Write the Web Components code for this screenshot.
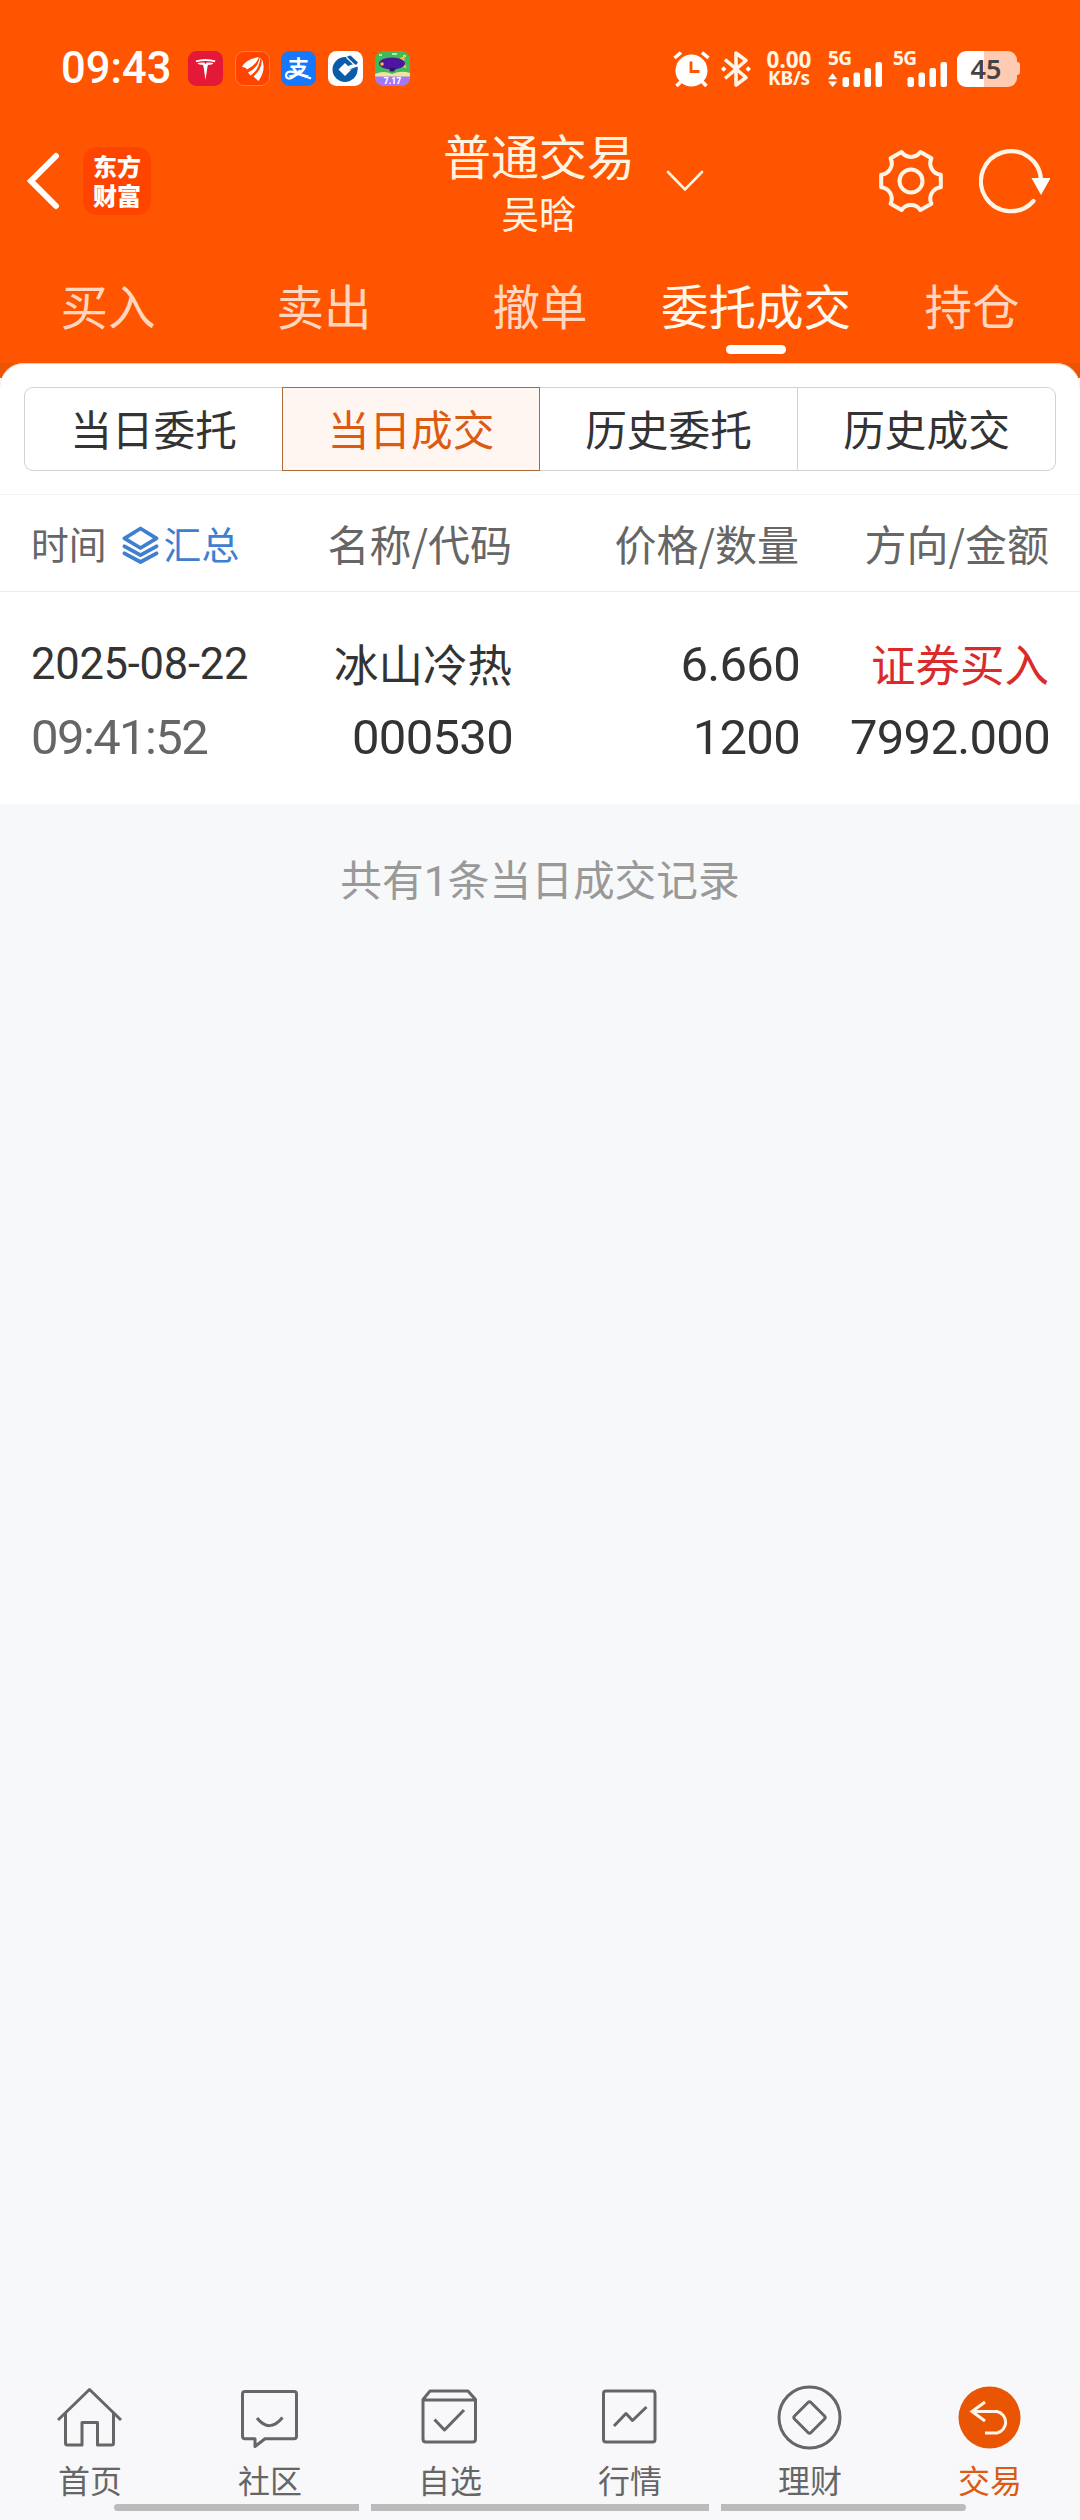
<!DOCTYPE html>
<html lang="zh-CN">
<head>
<meta charset="utf-8">
<title>普通交易</title>
<style>
html,body{margin:0;padding:0}
body{width:1080px;height:2520px;overflow:hidden;background:#f7f8fa;font-family:"Noto Sans CJK SC",sans-serif;color:#333}
</style>
</head>
<body>
<trade-app></trade-app>
<script>
const define = (name, html) => {
  const tpl = document.createElement('template');
  tpl.innerHTML = html;
  customElements.define(name, class extends HTMLElement {
    constructor() {
      super();
      this.attachShadow({ mode: 'open' }).appendChild(tpl.content.cloneNode(true));
    }
  });
};

/* Status bar: clock, notification icons, radios, battery */
define('signal-bars', `
<style>
:host{display:flex;flex-direction:column;height:36px;width:55px;font:700 19px/15px "Noto Sans",sans-serif;color:#fff5e6}
svg{display:block;margin-top:-4px}
span{letter-spacing:-.6px}
:host([idle]) .data{display:none}
</style>
<span>5G</span>
<svg width="55" height="25" viewBox="0 0 55 25" fill="#fff">
<rect x="14.5" y="15" width="6.5" height="10" rx="2.2"/><rect x="25.5" y="10.5" width="6.5" height="14.5" rx="2.2"/><rect x="36.5" y="6" width="6.5" height="19" rx="2.2"/><rect x="47.5" y="0" width="6.5" height="25" rx="2.2"/>
<path class="data" d="M0 17.3 4.6 11.3 9.2 17.3ZM0 19.500H9.2L4.6 25Z"/></svg>`);

define('status-bar', `
<style>
:host{display:flex;align-items:center;justify-content:space-between;height:137px;padding:0 60px 0 61px;box-sizing:border-box;color:#fff}
.l,.r{display:flex;align-items:center}
.clock{font:500 43.5px/50px Roboto,sans-serif;width:127px}
.apps{display:flex;gap:11.7px}
svg{display:block;overflow:visible}
.net{display:flex;flex-direction:column;align-items:center;width:48px;margin-left:14px;font:700 22.5px/19px "Noto Sans",sans-serif;color:#fff5e6}
.net small{font-size:19px;line-height:19px;letter-spacing:-.2px}
.bat{display:flex;align-items:center}
.cell{display:flex;align-items:center;justify-content:center;width:60px;height:36px;border-radius:9px;background:linear-gradient(90deg,#fff 26.5px,#ffccb3 26.5px);color:#444;font:600 27px/36px "Noto Sans",sans-serif;box-sizing:border-box;padding-right:2px}
.nub{width:3px;height:13px;border-radius:0 3px 3px 0;background:#ffccb3}
</style>
<div class="l">
 <div class="clock">09:43</div>
 <div class="apps">
  <svg width="35" height="35" viewBox="0 0 35 35"><rect width="35" height="35" rx="8.5" fill="#e31937"/><path d="M7.5 9.5Q17.5 6.5 27.5 9.5L26.7 11.2Q17.5 8.7 8.3 11.2ZM9.5 12Q13 11.2 16.2 11.6L17.5 13 18.8 11.6Q22 11.2 25.5 12 24.5 14 21.8 13.8 20 13.7 19.6 15L17.5 29 15.4 15Q15 13.7 13.2 13.8 10.5 14 9.5 12Z" fill="#fff"/></svg>
  <svg width="35" height="35" viewBox="0 0 35 35"><rect x=".5" y=".5" width="34" height="34" rx="8.5" fill="#ff4400" stroke="#ff7a45"/><path d="M7 16Q11 8 22 6.5L24 6Q21 14.500 12 18.5 11 16 7 16ZM24.5 7Q23 17 13 21.5L15.5 24.5Q24 19 25.5 7ZM26.5 7Q28 17 18.5 25.5L23.5 30Q32 18 26.5 7Z" fill="#fff"/></svg>
  <svg width="35" height="35" viewBox="0 0 35 35"><rect width="35" height="35" rx="8.5" fill="#1677ff"/><text x="17.5" y="24" text-anchor="middle" font-family="Noto Sans CJK SC" font-weight="700" font-size="21" fill="#fff">支</text><path d="M19 19Q13 28 7.5 27.5 4 26.5 5.5 22.5 8 19 15 22L30 27.5" fill="none" stroke="#fff" stroke-width="2.2"/></svg>
  <svg width="35" height="35" viewBox="0 0 35 35"><rect width="35" height="35" rx="8.5" fill="#fff"/><circle cx="17" cy="18.500" r="12.5" fill="#0b5bab"/><path d="M17 12 23.500 18.500 17 25 10.500 18.500Z" fill="#fff"/><path d="M20 15 24 13.500 31 13.500 31 15.500 23 19Z" fill="#fff"/><path d="M19 5.500 22.500 4.500 30 11.500 28 13.800Z" fill="#0b5bab"/><path d="M18.500 6.500 26.500 14" stroke="#fff" stroke-width="1.200"/><path d="M21 18.500 29.500 15.500V19Z" fill="#0b5bab"/></svg>
  <svg width="35" height="35" viewBox="0 0 35 35"><defs><clipPath id="c"><rect width="35" height="35" rx="8.5"/></clipPath></defs><g clip-path="url(#c)"><rect width="35" height="35" fill="#42b95b"/><path d="M0 23Q9 19 17 23 26 19 35 22V28H0Z" fill="#eee4a0"/><rect y="25.5" width="35" height="10" fill="#a377f5"/><path d="M4 4H7M17 3H22M28 5H31" stroke="#dcff9c" stroke-width="1.5"/><path d="M25 7 30 5 29 11 32 17 25 16Z" fill="#e8c832"/><ellipse cx="17" cy="12.5" rx="13" ry="6" fill="#4c16a0"/><path d="M14 17H21L19 20.5H15Z" fill="#35106f"/><circle cx="7" cy="13" r="1.8" fill="#ffb92e"/></g><text x="17.5" y="33.2" text-anchor="middle" font-family="Roboto" font-weight="900" font-size="8.500" fill="#fff">7.17</text></svg>
 </div>
</div>
<div class="r">
 <svg width="37" height="36" viewBox="0 0 37 36"><circle cx="18.5" cy="19.5" r="16" fill="#fff"/><path d="M1.5 7 8 1.5M35.5 7 29 1.5M3.5 35 8 30.5M33.5 35 29 30.5" stroke="#fff" stroke-width="3.6"/><path d="M18 10.5V20.5H26.5" fill="none" stroke="#f50" stroke-width="2.8"/></svg>
 <svg style="margin-left:11px" width="30" height="36" viewBox="0 0 30 36"><path d="M4 8.5 25 26.5 15 34V2L25 9.5 4 27.5" fill="none" stroke="#fff5e6" stroke-width="3.6" stroke-linejoin="round"/><path d="M0 18 2.7 15.2 5.5 18 2.7 20.8ZM24.5 18 27.2 15.2 30 18 27.2 20.8Z" fill="#fff"/></svg>
 <div class="net"><span>0.00</span><small>KB/s</small></div>
 <signal-bars style="margin-left:15px"></signal-bars>
 <signal-bars idle style="margin-left:10px"></signal-bars>
 <div class="bat" style="margin-left:9px"><div class="cell">45</div><div class="nub"></div></div>
</div>`);

/* Page header with account title and actions */
define('title-bar', `
<style>
:host{display:grid;grid-template-columns:1fr auto 1fr;align-items:center;height:114px;margin:-13px 0 11px;padding:0 30px 0 26px;box-sizing:border-box;color:#fff}
svg{display:block}
.l,.r{display:flex;align-items:center}
.l{gap:23px}
.r{justify-content:flex-end}
.logo{display:flex;flex-direction:column;align-items:center;justify-content:center;width:68px;height:68px;border-radius:14px;background:#ff4400;font-weight:900;font-size:24px;line-height:29px;padding-bottom:2px;box-sizing:border-box}
.t{display:flex;flex-direction:column;align-items:center;color:#fff3e2;padding-left:2px}
.t b{font-weight:400;font-size:48px;line-height:60px}
.t span{font-size:37.5px;line-height:52px;margin-top:2px}
.drop{margin:0 auto 0 31px}
</style>
<div class="l">
 <svg width="34" height="58" viewBox="0 0 34 58"><path d="M30 4 5 29 30 54" fill="none" stroke="#fff" stroke-width="6" stroke-linecap="round"/></svg>
 <div class="logo"><span>东方</span><span>财富</span></div>
</div>
<div class="t"><b>普通交易</b><span>吴晗</span></div>
<div class="r">
 <svg class="drop" width="38" height="22" viewBox="0 0 38 22"><path d="M2 2 19 19.5 36 2" fill="none" stroke="#fff5e6" stroke-width="2.6" stroke-linecap="round"/></svg>
 <svg width="66" height="66" viewBox="-33 -33 66 66" fill="none" stroke="#fff5e6" stroke-width="4" stroke-linejoin="round"><circle r="11.5"/><path d="M29.8 -6.3V6.3A11.5 11.5 0 0 0 20.4 22.7L9.4 29A11.5 11.5 0 0 0 -9.4 29L-20.4 22.7A11.5 11.5 0 0 0 -29.8 6.3V-6.3A11.5 11.5 0 0 0 -20.4 -22.7L-9.4 -29A11.5 11.5 0 0 0 9.4 -29L20.4 -22.7A11.5 11.5 0 0 0 29.8 -6.3Z"/></svg>
 <svg style="margin-left:35px" width="71" height="66" viewBox="-32 -33 71 66"><path d="M30 0A30 30 0 1 0 22.5 20" fill="none" stroke="#fff5e6" stroke-width="4.2" stroke-linecap="round"/><path d="M20.5 -3H39.5L30 14Z" fill="#fff"/></svg>
</div>`);

define('tab-item', `
<style>
:host{flex:1;display:flex;flex-direction:column;align-items:center;font-size:47.5px;line-height:70px;color:#ffd6bf}
i{width:60px;height:9px;border-radius:4.5px;margin-top:5px}
:host([active]){color:#fffaf0}
:host([active]) i{background:#fff}
</style><slot></slot><i></i>`);
define('tab-strip', `<style>:host{display:flex;height:114px;padding-top:21px;box-sizing:border-box}</style><slot></slot>`);

/* Segmented control */
define('seg-item', `
<style>
:host{flex:0 0 258px;display:flex;align-items:center;justify-content:center;font-size:41.7px;line-height:60px;padding-bottom:3px;box-sizing:border-box;border:1px solid #d2d2d2;border-left-width:0;color:#333}
:host(:first-child){border-left-width:1px;border-radius:9px 0 0 9px;border-right-width:0}
:host(:last-child){border-radius:0 9px 9px 0}
:host([active]){border:1px solid #a96a3c;background:#fff6f2;color:#dc5a12}
</style><slot></slot>`);
define('seg-control', `<style>:host{display:flex;height:84px}</style><slot></slot>`);

/* Records table */
define('record-grid', `
<style>
:host{display:grid;grid-template-columns:235px 246px 287px 250px;padding-left:31px;align-items:center}
</style><slot></slot>`);
define('record-cell', `
<style>
:host{display:flex;align-items:center;justify-content:flex-end;font-size:42px;line-height:60px;white-space:nowrap}
:host([start]){justify-content:flex-start}
:host([num]){font:49px/60px Roboto,sans-serif;letter-spacing:-.7px;padding-top:2px;margin-right:-1px}
:host([date]){font:43.5px/60px Roboto,sans-serif;letter-spacing:-.25px;padding-top:2px}
:host([clock]){letter-spacing:-1.6px}
:host([name]){font-size:44.5px;padding-bottom:3px}
</style><slot></slot>`);
define('summary-link', `
<style>:host{display:flex;align-items:center;margin-left:15px;color:#3e80cf;gap:5px}svg{display:block;margin-top:3px}</style>
<svg width="37" height="38" viewBox="0 0 37 38" fill="none" stroke="#3e80cf" stroke-width="3.8" stroke-linejoin="round" stroke-linecap="round"><path d="M18.5 2.5 34.5 12.3 18.5 22 2.5 12.3ZM2.5 20.3 18.5 29.2 34.5 20.3M2.5 27.3 18.5 36 34.5 27.3"/></svg><slot></slot>`);

define('order-sheet', `
<style>
:host{display:block;background:linear-gradient(#ea5504 15px,#fff 15px)}
.card{background:#fff;border-radius:24px 24px 0 0;padding-top:24px;box-shadow:inset 0 1px 0 #f3c7a8}
seg-control{margin:0 24px 23px}
.head{border-top:1px solid #f3f3f3;border-bottom:1px solid #ebebeb;box-sizing:border-box;color:#666;height:98px}
.head record-grid{height:95px}
.time{font-size:37.8px;padding-top:1px}
.row{height:212px;box-sizing:border-box;padding-top:42px}
.row record-grid{grid-auto-rows:60px;row-gap:13px}
.buy{color:#d92b2b}.g{color:#666}
.sum{padding-top:44px;background:#f7f8fa;text-align:center;font-size:41.7px;line-height:60px;color:#999}
.sum span{font-family:Roboto,sans-serif;font-size:43px}
</style>
<div class="card">
 <seg-control><seg-item>当日委托</seg-item><seg-item active>当日成交</seg-item><seg-item>历史委托</seg-item><seg-item>历史成交</seg-item></seg-control>
 <div class="head"><record-grid>
  <record-cell start class="time">时间<summary-link>汇总</summary-link></record-cell><record-cell>名称/代码</record-cell><record-cell>价格/数量</record-cell><record-cell>方向/金额</record-cell>
 </record-grid></div>
 <div class="row"><record-grid>
  <record-cell start date>2025-08-22</record-cell><record-cell name>冰山冷热</record-cell><record-cell num>6.660</record-cell><record-cell name class="buy">证券买入</record-cell>
  <record-cell start num clock class="g">09:41:52</record-cell><record-cell num>000530</record-cell><record-cell num>1200</record-cell><record-cell num>7992.000</record-cell>
 </record-grid></div>
</div>
<div class="sum">共有<span>1</span>条当日成交记录</div>`);

/* Bottom navigation */
define('nav-item', `
<style>
:host{flex:1;display:flex;flex-direction:column;align-items:center;font-size:32px;line-height:40px;color:#666}
:host([active]){color:#dc5a12}
.i{height:66px;margin-bottom:9px}
</style><div class="i"><slot name="icon"></slot></div><slot></slot>`);
define('bottom-nav', `
<style>
:host{display:flex;flex-direction:column;background:#f8f8fa;height:136px}
.items{display:flex;height:120px}
svg{display:block;fill:none;stroke:#666;stroke-width:3;stroke-linejoin:round}
.bars{display:flex;gap:12px;padding:0 114px}
.bars i{height:7px;background:#bbb;flex:245}
.bars i:nth-child(2){flex:338}
.bars i:first-child{border-radius:4px 0 0 4px}.bars i:last-child{border-radius:0 4px 4px 0}
</style>
<div class="items">
<nav-item><svg slot="icon" width="66" height="66" viewBox="0.5 0 66 66"><path d="M1.5 36 33 5.5 64.5 36M9 29.5V59Q9 61 11 61H25.5V38.5H41V61H55Q57 61 57 59V29.5"/></svg>首页</nav-item>
<nav-item><svg slot="icon" width="66" height="66" viewBox="0.5 0 66 66"><path d="M8.5 7.5H57.5Q60 7.5 60 10V52Q60 54.8 57.5 54.8H28.5L18.5 62.5V54.8H8.5Q6 54.8 6 52V10Q6 7.5 8.5 7.5ZM20.5 34Q33 49.5 46 33.5"/></svg>社区</nav-item>
<nav-item><svg slot="icon" width="66" height="66" viewBox="0 0 66 66"><path d="M6 15.5 13 7H51L58.5 15.5V55Q58.5 58 55.5 58H9Q6 58 6 55ZM6 16H58.5M17.5 35.5 27.5 46 47 26"/></svg>自选</nav-item>
<nav-item><svg slot="icon" width="66" height="66" viewBox="0 0 66 66"><rect x="6.5" y="7" width="51.5" height="51" rx="2.5"/><path d="M17 42 29 29.5 35.5 36.5 49.5 23"/></svg>行情</nav-item>
<nav-item><svg slot="icon" width="66" height="66" viewBox="0.5 0 66 66"><circle cx="33" cy="33.5" r="30.5"/><path d="M31.5 18.5Q33 17 34.5 18.5L48 32Q49.5 33.5 48 35L34.5 48.5Q33 50 31.5 48.5L18 35Q16.5 33.5 18 32Z"/></svg>理财</nav-item>
<nav-item active><svg slot="icon" width="66" height="66" viewBox="0.5 0 66 66"><circle cx="33" cy="33.5" r="31" fill="#ea5504" stroke="none"/><path stroke="#fff5e6" stroke-linejoin="miter" d="M28.5 18 15.5 27.5 28.5 37M16 27.5H40.5A11 11 0 0 1 40.5 49H28.5"/></svg>交易</nav-item>
</div>
<div class="bars"><i></i><i></i><i></i></div>`);

define('trade-app', `
<style>
:host{display:flex;flex-direction:column;height:2520px}
header{background:#ff5500;height:363px}
main{flex:1;background:#f7f8fa}
</style>
<header><status-bar></status-bar><title-bar></title-bar>
<tab-strip><tab-item>买入</tab-item><tab-item>卖出</tab-item><tab-item>撤单</tab-item><tab-item active>委托成交</tab-item><tab-item>持仓</tab-item></tab-strip></header>
<main><order-sheet></order-sheet></main>
<bottom-nav></bottom-nav>`);
</script>
</body>
</html>
